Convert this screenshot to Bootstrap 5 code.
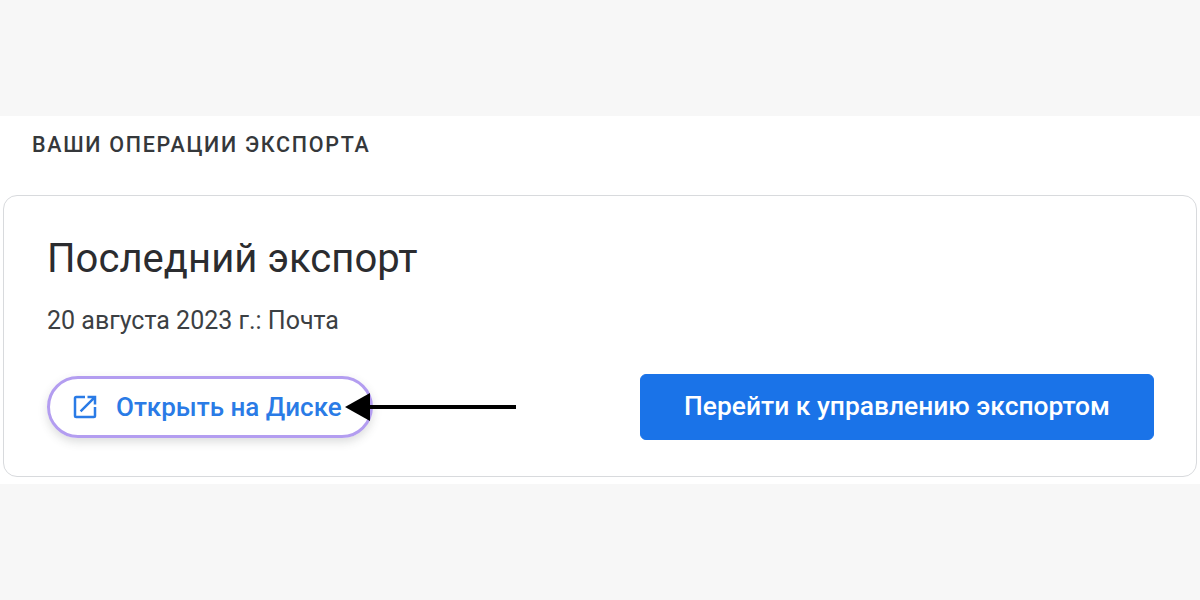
<!DOCTYPE html>
<html lang="ru">
<head>
    <meta charset="UTF-8">
    <meta name="viewport" content="width=device-width, initial-scale=1.0">
    <title>Ваши операции экспорта</title>
    <link href="https://cdn.jsdelivr.net/npm/bootstrap@5.3.0/dist/css/bootstrap.min.css" rel="stylesheet">
    <style>
        body {
            background-color: #f7f7f7;
            font-family: Roboto, "Liberation Sans", sans-serif;
        }
        .export-section {
            margin-top: 116px;
            height: 368px;
            padding: 0 3px;
            background: #fff;
        }
        .export-heading {
            margin: 0;
            padding: 16px 0 0 29px;
            height: 79px;
            font-size: 21.5px;
            line-height: 26px;
            font-weight: 500;
            letter-spacing: 1.7px;
            color: #35383b;
        }
        .export-card {
            height: 282px;
            padding: 37px 42px 0 43px;
            border: 1px solid #d8dadd;
            border-radius: 14px;
        }
        .export-title {
            margin: 0 0 21px;
            font-size: 40px;
            line-height: 52px;
            font-weight: 400;
            letter-spacing: .05px;
            color: #2b2c2f;
        }
        .export-date {
            margin: 0 0 38px;
            font-size: 25px;
            line-height: 30px;
            color: #3c4043;
        }
        .drive-link {
            position: relative;
            width: 326px;
            height: 62px;
            padding-left: 20px;
            gap: 16px;
            border: 3px solid #b39df0;
            border-radius: 31px;
            font-size: 26px;
            font-weight: 500;
            color: #2a7be6;
            text-decoration: none;
            box-shadow: 0 4px 10px rgba(60, 64, 67, .18);
        }
        .drive-arrow {
            position: absolute;
            left: 293px;
            top: 12px;
        }
        .manage-btn {
            width: 514px;
            height: 66px;
            font-size: 26.4px;
            font-weight: 500;
            --bs-btn-bg: #1a73e8;
            --bs-btn-border-color: #1a73e8;
            --bs-btn-hover-bg: #1a73e8;
            --bs-btn-border-radius: 6px;
        }
    </style>
</head>
<body>
    <section class="export-section">
        <h2 class="export-heading">ВАШИ ОПЕРАЦИИ ЭКСПОРТА</h2>
        <div class="export-card">
            <h3 class="export-title">Последний экспорт</h3>
            <p class="export-date">20 августа 2023 г.: Почта</p>
            <div class="d-flex justify-content-between align-items-center">
                <a class="drive-link d-flex align-items-center" href="#">
                    <svg width="30" height="30" viewBox="0 0 24 24" fill="#2a7be6" aria-hidden="true">
                        <path d="M19 19H5V5h7V3H5a2 2 0 0 0-2 2v14a2 2 0 0 0 2 2h14a2 2 0 0 0 2-2v-7h-2v7zM14 3v2h3.59l-9.83 9.83 1.41 1.41L19 6.41V10h2V3h-7z"/>
                    </svg>
                    <span>Открыть на Диске</span>
                    <svg class="drive-arrow" width="176" height="32" viewBox="0 0 176 32" aria-hidden="true">
                        <rect x="26" y="14" width="147" height="4" fill="#000"/>
                        <path d="M2 16 27 2v28z" fill="#000"/>
                    </svg>
                </a>
                <a class="btn btn-primary manage-btn d-flex align-items-center justify-content-center" href="#">Перейти к управлению экспортом</a>
            </div>
        </div>
    </section>
    <script src="https://cdn.jsdelivr.net/npm/bootstrap@5.3.0/dist/js/bootstrap.bundle.min.js"></script>
</body>
</html>
